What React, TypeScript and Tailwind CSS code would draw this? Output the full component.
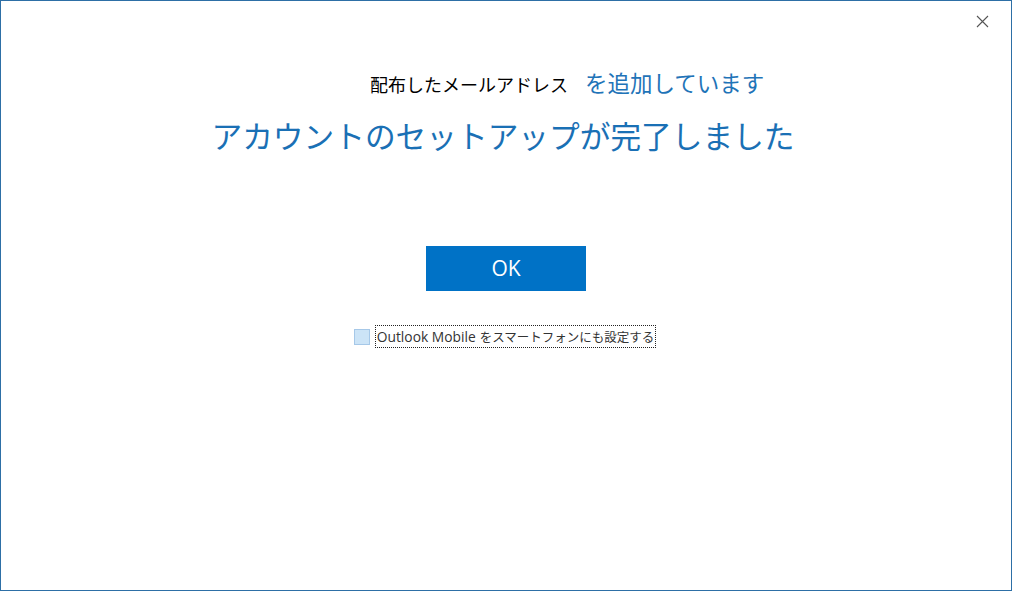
import { useState } from "react";

const jp = { fontFamily: '"Noto Sans CJK JP", "Noto Sans", sans-serif' };

export default function App() {
  const [checked, setChecked] = useState(false);

  return (
    <div
      className="w-[1012px] h-[591px] bg-white border border-[#2d6fa6] relative flex flex-col overflow-hidden"
      style={jp}
    >
      {/* close button */}
      <button className="absolute top-[13px] right-[22px] w-[14px] h-[14px] flex items-center justify-center text-[#555]">
        <svg width="13" height="13" viewBox="0 0 13 13">
          <path d="M1 1L12 12M12 1L1 12" stroke="#555" strokeWidth="1.1" />
        </svg>
      </button>

      <div className="flex items-end pl-[369px] pt-[66px] leading-none">
        <span className="text-[18px] text-black leading-[26px]">配布したメールアドレス</span>
        <span className="ml-[17px] text-[22.5px] text-[#1f74b8] leading-[30px]">を追加しています</span>
      </div>

      <h1 className="mt-[16px] text-center text-[30.7px] text-[#1a70b5] leading-[44px] pr-[6px]">
        アカウントのセットアップが完了しました
      </h1>

      <div className="flex justify-center mt-[89px]">
        <button
          className="w-[160px] h-[45px] bg-[#0072c6] text-white text-[21px] flex items-center justify-center"
          style={{ fontFamily: '"Open Sans", sans-serif' }}
        >
          OK
        </button>
      </div>

      <div className="flex justify-center mt-[34px] pr-[2px]">
        <label className="flex items-center gap-[5px] cursor-pointer" onClick={() => setChecked(!checked)}>
          <span className="w-[16px] h-[16px] bg-[#cce4f7] border border-[#a6c8e8] flex items-center justify-center">
            {checked && (
              <svg width="12" height="12" viewBox="0 0 12 12">
                <path d="M2 6l3 3 5-6" stroke="#222" strokeWidth="1.4" fill="none" />
              </svg>
            )}
          </span>
          <span className="text-[#333] leading-[21px] px-[1px] border border-dotted border-[#222] flex items-center">
            <span className="text-[13.8px]" style={{ fontFamily: '"Open Sans", sans-serif' }}>
              Outlook Mobile
            </span>
            <span className="text-[12.5px] ml-[4px]">をスマートフォンにも設定する</span>
          </span>
        </label>
      </div>
    </div>
  );
}
